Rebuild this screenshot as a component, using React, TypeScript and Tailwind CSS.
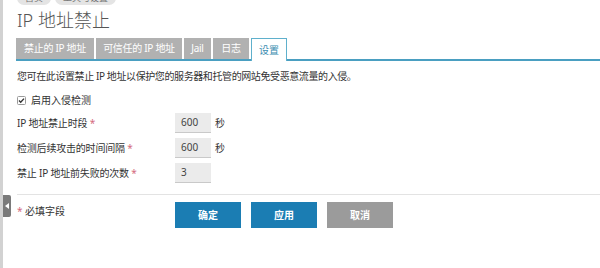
import React from "react";

const font = { fontFamily: '"Noto Sans", "Noto Sans CJK SC", sans-serif' };

function Tab({ label, w, active }: { label: string; w: string; active?: boolean }) {
  if (active) {
    return (
      <div className={`${w} h-[23px] -mb-[2px] flex items-center justify-center bg-white border border-b-0 border-[#5fb0cc] text-[#3b8db0] text-[10px]`}>
        {label}
      </div>
    );
  }
  return (
    <div className={`${w} h-[21px] flex items-center justify-center bg-[#b1b1b1] text-white text-[10px] tracking-[-0.3px] whitespace-nowrap`}>
      {label}
    </div>
  );
}

function Field({ label, value, unit }: { label: string; value: string; unit?: string }) {
  return (
    <div className="flex items-center h-[20px]">
      <div className="w-[158px] text-[10px] text-[#333] tracking-[-0.2px]">
        {label} <span className="text-[#d46a7e]">*</span>
      </div>
      <div className="w-[36px] h-[20px] bg-[#ebebeb] border-b border-[#c9c9c9] flex items-center pl-[6px] text-[10px] text-[#444]">
        {value}
      </div>
      {unit && <div className="ml-[4px] text-[10px] text-[#333]">{unit}</div>}
    </div>
  );
}

export default function App() {
  return (
    <div className="w-[600px] h-[268px] bg-white relative overflow-hidden flex" style={font}>
      <div className="w-[3px] h-full bg-[#d2d2d2] shrink-0" />
      <div className="absolute left-[3px] top-[195px] w-[8px] h-[22px] bg-[#7a7a7a] rounded-r-[2px] flex items-center justify-center">
        <svg width="4" height="6" viewBox="0 0 4 6">
          <path d="M4 0 L0 3 L4 6 Z" fill="#fff" />
        </svg>
      </div>
      <div className="flex-1 flex flex-col pl-[14px]">
        <div className="flex gap-[4px] h-[14px] -mt-[9px] text-[9px] text-[#777]">
          <div className="bg-[#e4e4e4] rounded-[7px] px-[8px] flex items-center">首页</div>
          <div className="bg-[#e4e4e4] rounded-[7px] px-[8px] flex items-center">工具与设置</div>
        </div>
        <div className="mt-[5px] h-[20px] leading-[20px] text-[18px] text-[#555] font-light">IP 地址禁止</div>
        <div className="mt-[8px] -ml-[1px] flex items-end gap-[2px] border-b-2 border-[#4a9fc1] h-[23px]">
          <Tab w="w-[78px]" label="禁止的 IP 地址" />
          <Tab w="w-[86px]" label="可信任的 IP 地址" />
          <Tab w="w-[27px]" label="Jail" />
          <Tab w="w-[36px]" label="日志" />
          <Tab w="w-[36px]" label="设置" active />
        </div>
        <div className="mt-[8px] h-[14px] leading-[14px] text-[10px] text-[#333] tracking-[-0.4px] whitespace-nowrap">
          您可在此设置禁止 IP 地址以保护您的服务器和托管的网站免受恶意流量的入侵。
        </div>
        <div className="mt-[10px] h-[14px] flex items-center gap-[5px] text-[10px] text-[#333]">
          <svg width="9" height="9" viewBox="0 0 9 9">
            <rect x="0.5" y="0.5" width="8" height="8" rx="1" fill="#fff" stroke="#9a9a9a" />
            <path d="M2 4.6 L3.7 6.3 L7 2.6" fill="none" stroke="#333" strokeWidth="1.4" />
          </svg>
          <span>启用入侵检测</span>
        </div>
        <div className="mt-[6px] flex flex-col gap-[5px]">
          <Field label="IP 地址禁止时段" value="600" unit="秒" />
          <Field label="检测后续攻击的时间间隔" value="600" unit="秒" />
          <Field label="禁止 IP 地址前失败的次数" value="3" />
        </div>
        <div className="mt-[11px] h-px bg-[#e3e3e3]" />
        <div className="mt-[7px] flex">
          <div className="w-[158px] pt-[2px] text-[10px] text-[#333] leading-[14px]">
            <span className="text-[#d46a7e]">*</span> 必填字段
          </div>
          <div className="flex gap-[10px]">
            <button className="w-[66px] h-[26px] bg-[#1b7db3] text-white text-[10px] font-bold">确定</button>
            <button className="w-[66px] h-[26px] bg-[#1b7db3] text-white text-[10px] font-bold">应用</button>
            <button className="w-[66px] h-[26px] bg-[#9b9b9b] text-white text-[10px] font-bold">取消</button>
          </div>
        </div>
      </div>
    </div>
  );
}
